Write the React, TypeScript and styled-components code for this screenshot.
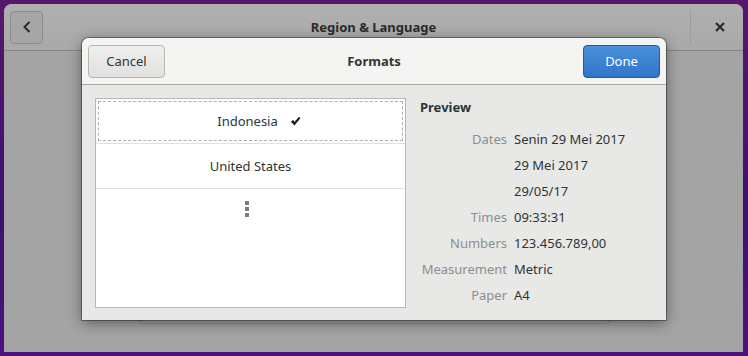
import React from "react";
import styled, { createGlobalStyle } from "styled-components";

const Global = createGlobalStyle`
  html, body {
    margin: 0;
    padding: 0;
    width: 748px;
    height: 356px;
    overflow: hidden;
    background: linear-gradient(180deg, #56186c 0%, #3f0f73 60%, #4c127e 100%);
    font-family: "Noto Sans", "DejaVu Sans", sans-serif;
    font-size: 13px;
    color: #2e3436;
  }
`;

const Desktop = styled.div`
  width: 748px;
  height: 356px;
  padding: 4px 5px 4px 4px;
  box-sizing: border-box;
  position: relative;
`;

const Window = styled.div`
  height: 348px;
  border-radius: 8px 8px 0 0;
  background: #a4a4a4;
  display: flex;
  flex-direction: column;
  overflow: hidden;
`;

const HeaderBar = styled.div`
  height: 46px;
  flex: none;
  background: linear-gradient(180deg, #b0b0b0, #a9a9a9);
  border-bottom: 1px solid #858585;
  display: flex;
  align-items: center;
  padding: 0 0 0 6px;
  gap: 6px;
`;

const IconButton = styled.div`
  width: 33px;
  height: 33px;
  box-sizing: border-box;
  border: 1px solid #8c8c8c;
  border-radius: 4px;
  background: #a6a6a6;
  display: flex;
  align-items: center;
  justify-content: center;
`;

const Title = styled.div`
  flex: 1;
  text-align: center;
  font-weight: bold;
  color: #2b2b2b;
  padding-left: 14px;
`;

const Sep = styled.div`
  width: 1px;
  height: 34px;
  background: #9b9b9b;
`;

const CloseBox = styled.div`
  width: 46px;
  height: 33px;
  display: flex;
  align-items: center;
  justify-content: center;
`;

const WinBody = styled.div`
  flex: 1;
  display: flex;
  justify-content: center;
  padding: 20px 0 0 0;
`;

const BgFrame = styled.div`
  width: 472px;
  height: 253px;
  box-sizing: border-box;
  border: 1px solid #8e8e8e;
  border-radius: 4px;
  display: flex;
  align-items: flex-end;
  justify-content: space-between;
  padding: 0 4px 3px 5px;
`;

const BgBtn = styled.div<{ $w: number }>`
  width: ${(p) => p.$w}px;
  height: 8px;
  border: 1px solid #8e8e8e;
  border-top: none;
  border-radius: 0 0 3px 3px;
  box-sizing: border-box;
`;

const Dialog = styled.div`
  position: absolute;
  left: 82px;
  top: 38px;
  width: 584px;
  height: 282px;
  border-radius: 7px 7px 0 0;
  background: #e8e8e7;
  box-shadow: 0 3px 14px rgba(0, 0, 0, 0.45), 0 0 0 1px rgba(0, 0, 0, 0.35);
  display: flex;
  flex-direction: column;
  overflow: hidden;
`;

const DialogHeader = styled.div`
  height: 46px;
  flex: none;
  background: #f4f4f3;
  border-bottom: 1px solid #a8a8a6;
  display: flex;
  align-items: center;
  padding: 0 6px;
`;

const Button = styled.div<{ $primary?: boolean }>`
  width: 77px;
  height: 33px;
  box-sizing: border-box;
  border-radius: 4px;
  display: flex;
  align-items: center;
  justify-content: center;
  border: 1px solid ${(p) => (p.$primary ? "#1b5da8" : "#b6b6b3")};
  background: ${(p) =>
    p.$primary
      ? "linear-gradient(180deg, #4a90d9, #3175cb)"
      : "linear-gradient(180deg, #efefee, #e0e0de)"};
  color: ${(p) => (p.$primary ? "#ffffff" : "#2e3436")};
`;

const DialogTitle = styled.div`
  flex: 1;
  text-align: center;
  font-weight: bold;
`;

const DialogBody = styled.div`
  flex: 1;
  display: flex;
  padding: 13px 0 13px 13px;
  gap: 14px;
`;

const ListBox = styled.div`
  width: 311px;
  box-sizing: border-box;
  border: 1px solid #b6b6b3;
  background: #ffffff;
  display: flex;
  flex-direction: column;
`;

const Row = styled.div`
  height: 45px;
  box-sizing: border-box;
  border-bottom: 1px solid #e0e0de;
  display: flex;
  align-items: center;
  justify-content: center;
  padding: 2px;
`;

const Focus = styled.div`
  align-self: stretch;
  flex: 1;
  border: 1px dashed #b0b0b0;
  display: flex;
  align-items: center;
  justify-content: center;
  gap: 12px;
  padding-left: 17px;
`;

const MoreRow = styled.div`
  height: 44px;
  box-sizing: border-box;
  display: flex;
  flex-direction: column;
  align-items: center;
  justify-content: center;
  gap: 2px;
  padding: 0 8px 4px 0;
`;

const Dot = styled.div`
  width: 4px;
  height: 4px;
  background: #7b7b7b;
`;

const Preview = styled.div`
  flex: 1;
  display: flex;
  flex-direction: column;
`;

const PreviewTitle = styled.div`
  font-weight: bold;
  height: 18px;
  line-height: 18px;
  margin-bottom: 10px;
`;

const Grid = styled.div`
  display: grid;
  grid-template-columns: 87px auto;
  column-gap: 7px;
  grid-auto-rows: 26px;
  align-items: center;
`;

const Label = styled.div`
  text-align: right;
  color: #8b8e8f;
  white-space: nowrap;
`;

const Value = styled.div`
  white-space: nowrap;
`;

const rows: [string, string][] = [
  ["Dates", "Senin 29 Mei 2017"],
  ["", "29 Mei 2017"],
  ["", "29/05/17"],
  ["Times", "09:33:31"],
  ["Numbers", "123.456.789,00"],
  ["Measurement", "Metric"],
  ["Paper", "A4"],
];

export default function App() {
  return (
    <Desktop>
      <Global />
      <Window>
        <HeaderBar>
          <IconButton>
            <svg width="12" height="14" viewBox="0 0 12 14">
              <path d="M8.5 2 L3.5 7 L8.5 12" fill="none" stroke="#2b2b2b" strokeWidth="2" />
            </svg>
          </IconButton>
          <Title>Region &amp; Language</Title>
          <Sep />
          <CloseBox>
            <svg width="10" height="10" viewBox="0 0 10 10">
              <path d="M1 1 L9 9 M9 1 L1 9" stroke="#2b2b2b" strokeWidth="2.2" />
            </svg>
          </CloseBox>
        </HeaderBar>
        <WinBody>
          <BgFrame>
            <BgBtn $w={66} />
            <BgBtn $w={66} />
            <BgBtn $w={34} />
          </BgFrame>
        </WinBody>
      </Window>
      <Dialog>
        <DialogHeader>
          <Button>Cancel</Button>
          <DialogTitle>Formats</DialogTitle>
          <Button $primary>Done</Button>
        </DialogHeader>
        <DialogBody>
          <ListBox>
            <Row>
              <Focus>
                <span>Indonesia</span>
                <svg width="11" height="10" viewBox="0 0 11 10">
                  <path d="M0.8 5.6 L3.2 4 L4.4 6 L9 0.8 L10.4 2.2 L4.4 9.4 Z" fill="#1e1e1e" />
                </svg>
              </Focus>
            </Row>
            <Row>United States</Row>
            <MoreRow>
              <Dot />
              <Dot />
              <Dot />
            </MoreRow>
          </ListBox>
          <Preview>
            <PreviewTitle>Preview</PreviewTitle>
            <Grid>
              {rows.map(([l, v], i) => (
                <React.Fragment key={i}>
                  <Label>{l}</Label>
                  <Value>{v}</Value>
                </React.Fragment>
              ))}
            </Grid>
          </Preview>
        </DialogBody>
      </Dialog>
    </Desktop>
  );
}
